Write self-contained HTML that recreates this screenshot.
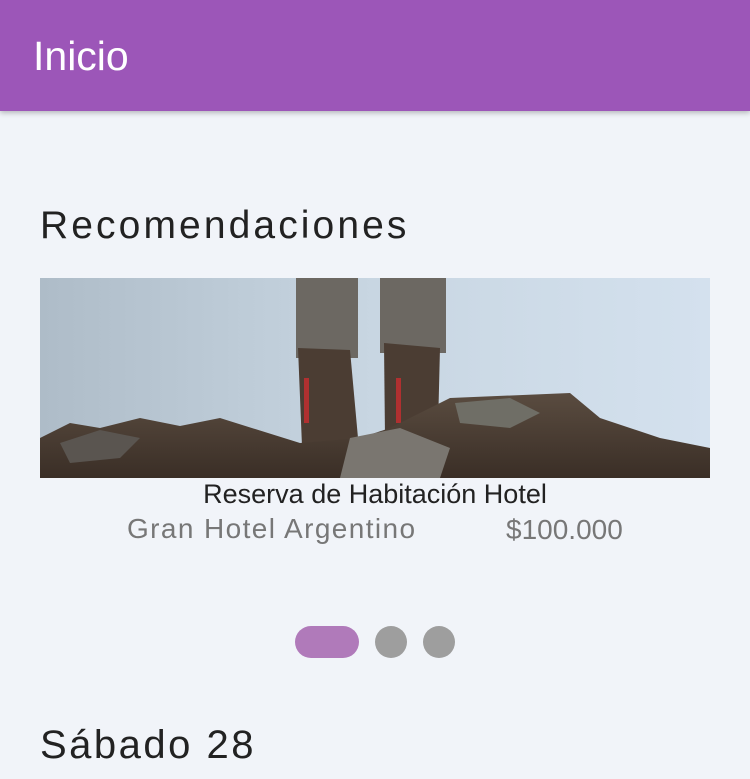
<!DOCTYPE html>
<html><head><meta charset="utf-8"><style>
body{margin:0;width:750px;height:779px;overflow:hidden;background:#f1f4f9;font-family:"Liberation Sans",sans-serif;position:relative}
.hdr{position:absolute;left:0;top:0;width:750px;height:111px;background:#9c56b8;box-shadow:0 2px 5px rgba(0,0,0,.25)}
.hdr span{position:absolute;left:33px;top:33px;font-size:41px;color:#fff}
.t{position:absolute;color:#222;white-space:nowrap}
</style></head><body>
<div class="hdr"><span>Inicio</span></div>
<div class="t" style="left:40px;top:204px;font-size:39px;letter-spacing:3.1px">Recomendaciones</div>
<svg style="position:absolute;left:40px;top:278px" width="670" height="200" viewBox="0 0 670 200">
<defs><linearGradient id="s" x1="0" x2="1"><stop offset="0" stop-color="#aebcc8"/><stop offset=".5" stop-color="#c8d6e2"/><stop offset="1" stop-color="#d4e1ee"/></linearGradient>
<linearGradient id="g" x1="0" y1="0" x2="0" y2="1"><stop offset="0" stop-color="#5a4c40"/><stop offset="1" stop-color="#3a2e26"/></linearGradient></defs>
<rect width="670" height="200" fill="url(#s)"/>
<rect x="256" y="0" width="62" height="80" fill="#6c6862"/>
<rect x="340" y="0" width="66" height="75" fill="#6c6862"/>
<path d="M258 70 L310 72 L318 160 L300 175 L262 168 Z" fill="#4b3d33"/>
<path d="M344 65 L400 70 L398 150 L382 165 L345 160 Z" fill="#4b3d33"/>
<rect x="264" y="100" width="5" height="45" fill="#b03030"/><rect x="356" y="100" width="5" height="45" fill="#b03030"/>
<path d="M0 160 L30 145 L60 150 L100 140 L140 148 L180 140 L260 165 L320 160 L350 150 L410 120 L530 115 L560 140 L620 160 L670 170 L670 200 L0 200 Z" fill="url(#g)"/>
<path d="M310 160 L360 150 L410 170 L400 200 L300 200 Z" fill="#7a7670"/>
<path d="M415 125 L470 120 L500 135 L470 150 L420 145 Z" fill="#6f6e66"/>
<path d="M20 165 L60 152 L100 160 L80 180 L30 185 Z" fill="#5a5550"/>
</svg>
<div class="t" style="left:0;width:750px;text-align:center;top:479px;font-size:27px">Reserva de Habitación Hotel</div>
<div class="t" style="left:127px;top:513px;font-size:28px;color:#777;letter-spacing:1.4px">Gran Hotel Argentino</div>
<div class="t" style="left:506px;top:514px;font-size:28px;color:#777">$100.000</div>
<div style="position:absolute;left:295px;top:626px;width:64px;height:32px;border-radius:16px;background:#b07aba"></div>
<div style="position:absolute;left:375px;top:626px;width:32px;height:32px;border-radius:50%;background:#9e9e9e"></div>
<div style="position:absolute;left:423px;top:626px;width:32px;height:32px;border-radius:50%;background:#9e9e9e"></div>
<div class="t" style="left:40px;top:723px;font-size:40px;letter-spacing:2.5px">Sábado 28</div>
</body></html>
